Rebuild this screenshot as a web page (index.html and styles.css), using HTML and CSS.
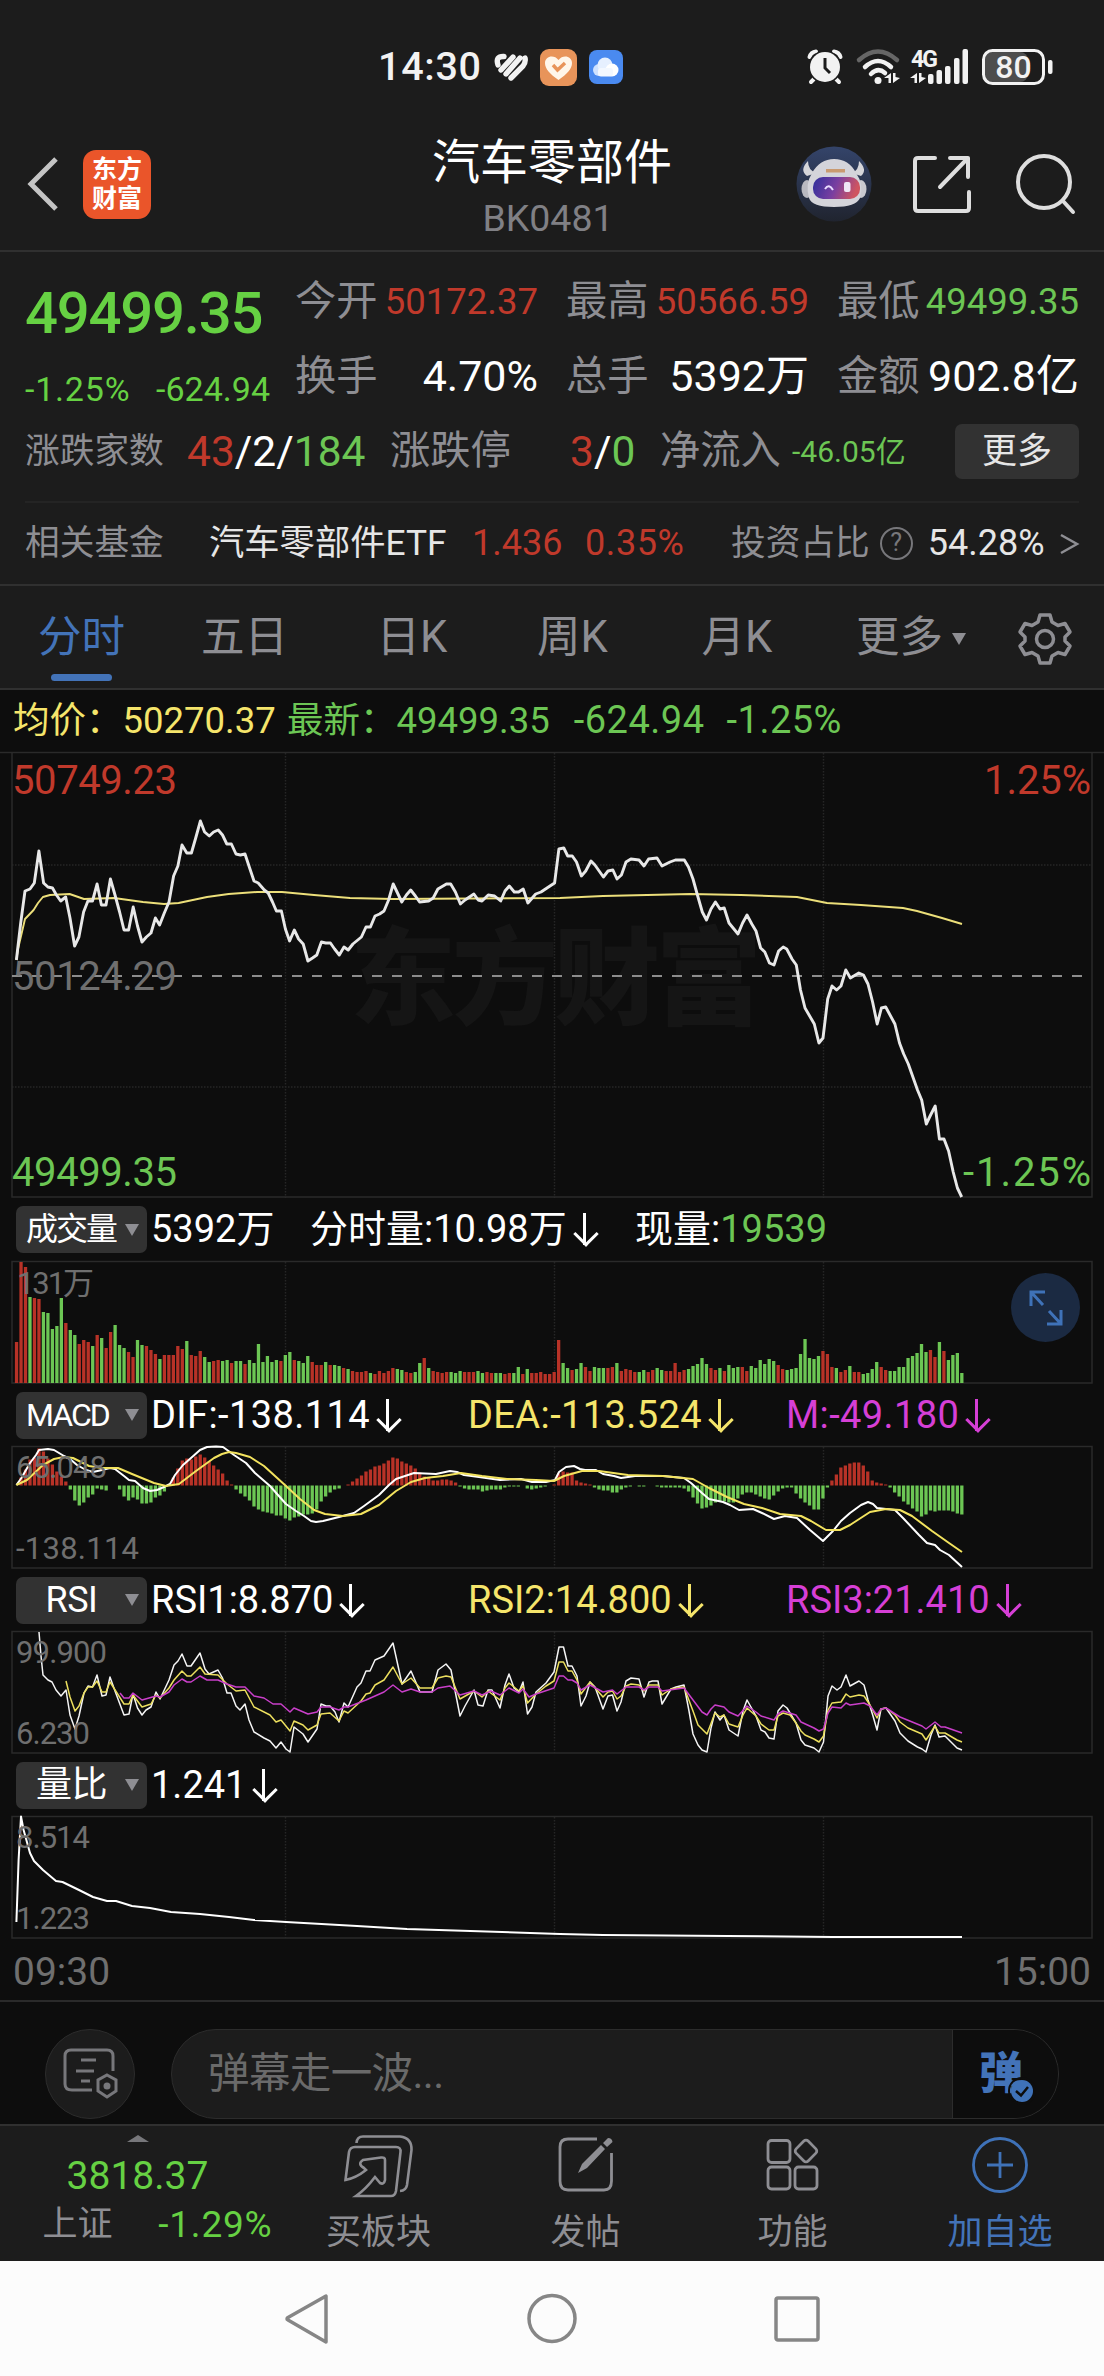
FILE: index.html
```html
<!DOCTYPE html>
<html lang="zh-CN">
<head>
    <meta charset="UTF-8">
    <meta name="viewport" content="width=device-width, initial-scale=1.0">
    <title>汽车零部件 BK0481</title>
    <link rel="stylesheet" href="styles.css">
</head>
<body>
    <!-- Status bar -->
    <div class="status-bar">
        <div class="status-left">
            <span class="clock">14:30</span>
            <svg class="ico-stripes" width="34" height="28" viewBox="0 0 34 28">
                <g stroke="#f2f2f2" stroke-width="5.4" stroke-linecap="round" fill="none">
                    <path d="M4 12 Q1 3 10 3.5 M7 17 L19 4 M12 21 L26 5 M17 25 L29 13 Q32 9 31 5"/>
                </g>
            </svg>
            <svg class="ico-heart" width="37" height="37" viewBox="0 0 37 37">
                <rect width="37" height="37" rx="9" fill="#e8945a"/>
                <path d="M18.5 31 C10 25 5 20 5 14 C5 7 14 5 18.5 11 C23 5 32 7 32 14 C32 20 27 25 18.5 31Z" fill="#fff6ea"/>
                <path d="M13 16 L17.5 21 L25 14" fill="none" stroke="#e8945a" stroke-width="3.4"/>
            </svg>
            <svg class="ico-cloud" width="34" height="34" viewBox="0 0 34 34">
                <rect width="34" height="34" rx="8" fill="#4a8af0"/>
                <circle cx="10" cy="20" r="6" fill="#cfe2ff"/>
                <circle cx="16" cy="15" r="7.5" fill="#e6f0ff"/>
                <circle cx="23" cy="20" r="6.5" fill="#fff"/>
                <rect x="9" y="18" width="15" height="8.5" rx="3" fill="#f3f8ff"/>
            </svg>
        </div>
        <div class="status-right">
            <svg width="36" height="36" viewBox="0 0 36 36">
                <g stroke="#f2f2f2" stroke-width="4" stroke-linecap="round">
                    <path d="M7 30 L4 33 M29 30 L32 33"/>
                    <path d="M2.5 8 Q4 3 9 2.5 M33.5 8 Q32 3 27 2.5" fill="none"/>
                </g>
                <circle cx="18" cy="18" r="16.5" fill="#1c1c1c"/>
                <circle cx="18" cy="18" r="15" fill="#f2f2f2"/>
                <path d="M18 9 V19 L23 24" fill="none" stroke="#1c1c1c" stroke-width="3"/>
            </svg>
            <svg class="ico-wifi" width="45" height="36" viewBox="0 0 45 36">
                <path d="M3 11 Q22 -6 41 11" fill="none" stroke="#666" stroke-width="4.5" stroke-linecap="round"/>
                <path d="M9 18 Q22 6 35 18 M15 25 Q22 18 29 24" fill="none" stroke="#f2f2f2" stroke-width="4.5" stroke-linecap="round"/>
                <circle cx="22" cy="31.5" r="3.5" fill="#f2f2f2"/>
                <path d="M28 29 L35 24 V34 H32.5 V29Z M37 24 H39.5 V28 L44 29 L37 34Z" fill="#f2f2f2"/>
            </svg>
            <svg class="ico-signal" width="59" height="36" viewBox="0 0 59 36">
                <text x="1" y="18" class="net-type">4G</text>
                <path d="M0 29 L7 24 V34 H4.5 V29Z M9 24 H11.5 V28 L16 29 L9 34Z" fill="#f2f2f2"/>
                <g fill="#f2f2f2">
                    <rect x="18" y="25" width="5.5" height="10" rx="2"/>
                    <rect x="26.5" y="21" width="5.5" height="14" rx="2"/>
                    <rect x="35" y="17" width="5.5" height="18" rx="2"/>
                    <rect x="44" y="9" width="5.5" height="26" rx="2"/>
                    <rect x="52.5" y="0" width="5.5" height="35" rx="2"/>
                </g>
            </svg>
            <svg class="ico-battery" width="71" height="36" viewBox="0 0 71 36">
                <rect x="2" y="3" width="44" height="30" rx="8" fill="#4d4d4d"/>
                <rect x="1.5" y="1.5" width="60" height="33" rx="9" fill="none" stroke="#f2f2f2" stroke-width="3"/>
                <rect x="66" y="11" width="4.5" height="14" rx="2" fill="#f2f2f2"/>
                <text x="31.5" y="29" text-anchor="middle" class="battery-text">80</text>
            </svg>
        </div>
    </div>

    <!-- Title bar -->
    <header class="title-bar">
        <div class="title-left">
            <svg width="34" height="58" viewBox="0 0 34 58">
                <path d="M31 4 L6 29 L31 54" fill="none" stroke="#c4c4c4" stroke-width="5"/>
            </svg>
            <div class="app-logo"><span>东方</span><span>财富</span></div>
        </div>
        <div class="title-center">
            <h1>汽车零部件</h1>
            <p>BK0481</p>
        </div>
        <div class="title-right">
            <svg width="76" height="76" viewBox="0 0 76 76">
                <defs>
                    <linearGradient id="visor" x1="0" y1="0" x2="1" y2="0.2">
                        <stop offset="0" stop-color="#2f2f9c"/>
                        <stop offset="0.55" stop-color="#7a3fa0"/>
                        <stop offset="1" stop-color="#cf5560"/>
                    </linearGradient>
                    <linearGradient id="sky" x1="0" y1="0" x2="0" y2="1">
                        <stop offset="0" stop-color="#34446a"/>
                        <stop offset="1" stop-color="#20242f"/>
                    </linearGradient>
                </defs>
                <circle cx="38" cy="38" r="37.5" fill="url(#sky)"/>
                <path d="M12 15 Q3 24 11 30 L20 27 Q12 24 12 15Z M63 15 Q72 24 65 30 L56 27 Q63 24 63 15Z" fill="#d5d5d9"/>
                <ellipse cx="11" cy="43" rx="5.5" ry="9" fill="#b9b9c0"/>
                <ellipse cx="65" cy="43" rx="5.5" ry="9" fill="#c9c9cf"/>
                <path d="M16 27 Q24 13 38 13 Q53 13 60 27 Q68 38 64 52 Q60 61 38 61 Q16 61 13 52 Q9 38 16 27Z" fill="#d4d4da"/>
                <rect x="17" y="31" width="47" height="22" rx="10" fill="url(#visor)"/>
                <path d="M29 43 Q33 37 37 44" fill="none" stroke="#e9dcff" stroke-width="2"/>
                <rect x="48" y="36" width="6.5" height="10" rx="2" fill="#efe6f5"/>
                <rect x="30" y="23" width="19" height="3.5" fill="#c99a70"/>
            </svg>
            <svg width="60" height="60" viewBox="0 0 60 60">
                <g fill="none" stroke="#dedede" stroke-width="4" stroke-linecap="round" stroke-linejoin="round">
                    <path d="M23 4 H6 Q3 4 3 7 V54 Q3 57 6 57 H54 Q57 57 57 54 V38"/>
                    <path d="M38 4 H56 V23 M56 4 L28 33"/>
                </g>
            </svg>
            <svg width="62" height="62" viewBox="0 0 62 62">
                <g fill="none" stroke="#dedede" stroke-width="4" stroke-linecap="round">
                    <circle cx="29" cy="29" r="26"/>
                    <path d="M48 48 L58 59"/>
                </g>
            </svg>
        </div>
    </header>

    <!-- Quote -->
    <section class="quote">
        <div class="quote-main">
            <div class="quote-price">
                <div class="price">49499.35</div>
                <div class="change"><span>-1.25%</span><span>-624.94</span></div>
            </div>
            <div class="stats">
                <div class="stat"><label>今开</label><b class="up sm">50172.37</b></div>
                <div class="stat"><label>最高</label><b class="up sm">50566.59</b></div>
                <div class="stat"><label>最低</label><b class="down sm">49499.35</b></div>
                <div class="stat"><label>换手</label><b>4.70%</b></div>
                <div class="stat"><label>总手</label><b>5392万</b></div>
                <div class="stat"><label>金额</label><b>902.8亿</b></div>
            </div>
        </div>
        <div class="breadth">
            <label class="lb-count">涨跌家数</label>
            <span class="count"><i class="up">43</i>/2/<i class="down">184</i></span>
            <label class="lb-limit">涨跌停</label>
            <span class="limit"><i class="up">3</i>/<i class="down">0</i></span>
            <label class="lb-flow">净流入</label>
            <span class="flow down">-46.05亿</span>
            <button class="more-btn">更多</button>
        </div>
        <div class="fund">
            <label>相关基金</label>
            <span class="fund-name">汽车零部件ETF</span>
            <span class="up fund-price">1.436</span>
            <span class="up fund-pct">0.35%</span>
            <label class="lb-ratio">投资占比</label>
            <span class="help">?</span>
            <span class="ratio">54.28%</span>
            <svg width="18" height="24" viewBox="0 0 18 24"><path d="M1 3 L17 12 L1 21" fill="none" stroke="#8e8e93" stroke-width="2.5"/></svg>
        </div>
    </section>

    <!-- Period tabs -->
    <nav class="tabs">
        <a class="active">分时</a>
        <a>五日</a>
        <a>日K</a>
        <a>周K</a>
        <a>月K</a>
        <a class="tab-more">更多<i class="caret"></i></a>
        <a class="tab-set">
            <svg width="54" height="54" viewBox="0 0 54 54">
                <g fill="none" stroke="#8e8e93" stroke-width="3.5" stroke-linejoin="round">
                    <path d="M22 3 H32 L34 10 L40 13.5 L47 11.5 L52 20 L47 25 V29 L52 34 L47 42.5 L40 40.5 L34 44 L32 51 H22 L20 44 L14 40.5 L7 42.5 L2 34 L7 29 V25 L2 20 L7 11.5 L14 13.5 L20 10Z"/>
                    <circle cx="27" cy="27" r="8.5"/>
                </g>
            </svg>
        </a>
    </nav>

    <!-- Charts -->
    <main class="charts">
        <div class="info-row">
            <span class="avg">均价：50270.37</span>
            <span class="last">最新：49499.35</span>
            <span class="last delta">-624.94</span>
            <span class="last delta">-1.25%</span>
        </div>

        <svg class="panel" width="1104" height="446" viewBox="0 0 1104 446">
            <g class="watermark"><text x="350" y="264" textLength="412">东方财富</text></g>
            <path class="grid" d="M12 113 H1092 M12 335 H1092 M285.5 1 V446 M554.5 1 V446 M823.5 1 V446"/>
            <path class="frame" d="M0 0.5 H1104 M12 0 V445 H1092 V0"/>
            <path d="M12 224 H1085" stroke="#8c8c8c" stroke-width="2" stroke-dasharray="10 10"/>
            <polyline class="line-avg" points="16.4,208 18,197 25,167 33.6,158 38,151 42.9,145 50,143 69.6,142 84,147 114,146 143,150 164,152 178.6,151 207,145 228.6,142 257,140 282,140 314,143 350,146 393,147 560,146 603,144 691,142 741,143 797,145 827,151 861,153 903,156 917,159 942,166 962,172"/>
            <polyline class="line-price" points="16.4,208 20.7,171 25,139 30,137 34.3,131 38.9,99 43.6,131 47.9,135 52.5,136 56.4,143 60.7,149 65.7,145 70,166 74.6,194 78.9,185 83.6,160 87.9,149 92.5,149 97.1,132 101.4,153 106,153 110.4,127 115,143 119.6,160 124,178 128.6,178 133.2,155 137.5,174 142,190 146.4,185 151,181 155.4,166 159.6,173 164.3,161 169,150 173.6,124 177.9,114 182,93 186.8,101 191.4,101 195.7,86 200.4,69 204.6,80 209.3,84 213.6,80 218.2,78 222.5,83 226.8,92 231.4,92 236,102 240.4,103 245,102 249.3,115 254,129 258.2,131 264.3,138 268.2,141 272.5,150 276.4,159 281.4,159 285.4,177 289.6,189 294.3,178 298.6,187 303.2,192 307.9,209 312.5,206 316.8,203 321.4,190 325.7,191 330.4,191 334.6,197 339.3,203 344,195 348.2,198 352.9,192 361.4,185 366,175 370.4,175 375,164 379.6,162 384,159 388.6,148 393.2,132 397.5,141 401.8,150 406.4,143 410.7,138 415.4,144 419.6,150 428.6,149 433.2,146 437.9,137 446.4,132 450.7,132 455.4,140 460.4,152 465,148 473.9,142 478.2,148 482,149 488.2,143 494.6,144 500.7,149 505,139 509.3,134 514.3,140 518.6,140 523.2,137 527.9,151 535.7,142 541,140 550,134 554.6,131 558.9,97 563.8,96 567.7,104 572.3,104 576.5,110 581.4,124 585.7,119 591,109 594.9,113 603.4,125 608,119 612.9,118 617,127 621.4,123 626,110 630.9,107 639,108 644,114 648.6,107 657,106 662,114 670,110 675.4,108 684.3,108 688.5,115 693,127 697.7,144 702.3,160 706.5,168 711,157 715.4,150 720,157 724.2,156 729,171 738,182 742.6,171 747,163 751.8,172 756,179 760.6,196 764.8,200 769.4,211 774,213 778.6,199 783.2,195 786.7,197 792,207 796.3,213 800.5,238 805,256 814.3,272 818.9,291 823,286 827.7,247 832,234 836.6,238 841,234 845.8,218 850.4,226 858.8,221 863.4,223 868,232 872.6,250 877.2,272 881.4,256 885.7,255 894.9,272 899.5,291 903.7,302 908.3,312 917.5,338 921.7,348 926.3,372 930.6,363 935.2,354 939.4,387 944,387 948.6,399 953.2,420 957.4,436 961.7,445"/>
            <g class="axis-lg">
                <text x="12" y="42" fill="#c0392b" textLength="165">50749.23</text>
                <text x="12" y="238" fill="#6f6f6f" textLength="165">50124.29</text>
                <text x="12" y="434" fill="#6cc654" textLength="165">49499.35</text>
                <text x="1091" y="42" fill="#c0392b" text-anchor="end" textLength="107">1.25%</text>
                <text x="1091" y="434" fill="#6cc654" text-anchor="end" textLength="128">-1.25%</text>
            </g>
        </svg>

        <div class="ind-row volume">
            <span class="ind-btn">成交量<i class="caret"></i></span>
            <span>5392万</span>
            <span>分时量:10.98万<i class="arrow"></i></span>
            <span>现量:<em class="down">19539</em></span>
        </div>
        <div class="panel-wrap">
            <svg class="panel" width="1104" height="123" viewBox="0 0 1104 123">
                <path class="grid" d="M285.5 1 V122 M554.5 1 V122 M823.5 1 V122"/>
                <rect class="frame" x="12" y="0.5" width="1080" height="121.5"/>
                <g id="volume-bars"></g>
                <text class="axis-sm" x="17" y="33" textLength="77">131万</text>
            </svg>
            <div class="expand">
                <svg width="34" height="36" viewBox="0 0 34 36">
                    <path d="M2 16 V2 H16 M2 2 L14 15 M32 20 V34 H18 M32 34 L20 21" fill="none" stroke="#3f72b8" stroke-width="3"/>
                </svg>
            </div>
        </div>

        <div class="ind-row macd">
            <span class="ind-btn">MACD<i class="caret"></i></span>
            <span class="c1">DIF:-138.114<i class="arrow"></i></span>
            <span class="c2">DEA:-113.524<i class="arrow"></i></span>
            <span class="c3">M:-49.180<i class="arrow"></i></span>
        </div>
        <svg class="panel" width="1104" height="123" viewBox="0 0 1104 123">
            <path class="grid" d="M285.5 1 V122 M554.5 1 V122 M823.5 1 V122"/>
            <rect class="frame" x="12" y="0.5" width="1080" height="121.5"/>
            <g id="macd-bars"></g>
            <polyline class="line-white" points="16.4,39 21.4,32 30,17 36,9 39,4 48,3 54,4 64,10 70,13 77,19 86,24 93,26 102,24 110,22 115,23 124,30 129,34 135,35 143,42 150,45 157,44 164,41 170,38 175,29 183,19 191,12 200,4 207,1 216,0.5 223,1 234,9 246,17 255,27 270,40 286,58 296,65 304,70 311,75 316,76 323,75 339,71 354,67 364,60 379,49 389,39 396,33 405,30 414,27 436,28 450,25 457,26 464,29 479,31 500,34 521,33 532,36 546,36 555,34 559,26 566,21 574,20 580,23 585,24 596,24 603,28 614,30 621,32 635,30 663,30 684,32 691,37 702,47 709,53 723,56 730,59 739,64 753,63 762,67 774,73 785,70 797,72 810,84 823,95 833,85 841,75 850,67 861,59 868,56 873,58 877,62 895,64 903,72 919,89 927,97 935,99 940,104 949,109 962,121"/>
            <polyline class="line-yellow" points="16.4,39 27,34 43,19 54,13 64,11 73,12 89,20 102,22 118,22 132,28 154,37 166,40 179,38 196,25 214,12 222,8 229,6 236,7 250,11 264,20 286,40 300,53 314,64 325,68 343,70 361,68 379,59 396,45 411,36 425,32 443,30 461,27 482,30 507,33 536,34 554,35 564,30 582,25 599,25 628,29 663,30 693,33 709,42 727,51 744,58 762,62 780,68 801,70 811,75 826,84 840,84 850,79 870,66 886,63 900,64 912,70 932,85 949,97 962,106"/>
            <text class="axis-sm" x="16" y="32" textLength="91">65.048</text>
            <text class="axis-sm" x="16" y="113" textLength="123">-138.114</text>
        </svg>

        <div class="ind-row">
            <span class="ind-btn"><em>RSI</em><i class="caret"></i></span>
            <span class="c1">RSI1:8.870<i class="arrow"></i></span>
            <span class="c2">RSI2:14.800<i class="arrow"></i></span>
            <span class="c3">RSI3:21.410<i class="arrow"></i></span>
        </div>
        <svg class="panel" width="1104" height="123" viewBox="0 0 1104 123">
            <path class="grid" d="M285.5 1 V122 M554.5 1 V122 M823.5 1 V122"/>
            <rect class="frame" x="12" y="0.5" width="1080" height="121.5"/>
            <polyline class="line-thin" stroke="#f5f5f5" points="39,1 41,25 43,44 48,49 52,51 56,59 61,65 66,59 70,84 75,98 79,85 84,62 88,55 92.5,56 97,44 102,65 106,64 110,46 115,60 124,84 129,83 133,63 137.5,77 142,84 146,79 151,76 156,61 160,68 169,49 174,34 178,30 182,23 187,35 191,35 200,22 205,38 209,43 218,39 222.5,47 227,62 231,62 236,75 240,79 245,73 249,89 254,101 264,107 270,110 276,117 281,111 286,118 290,121 294,96 303,103 308,111 317,98 321,73 326,75 330,75 335,81 339,91 344,72 348,76 357,56 361,52 366,40 370,40 375,29 384,25 393,12 402,53 411,40 420,61 432,61 438,39 446,33 451,39 460,85 465,75 474,59 478,74 483,75 488,59 492,59 500,77 505,54 509,43 514,57 519,61 523,51 527.5,83 532,76 536,61 546,52 554,41 559,16 563.5,16 568,35 572,35 577,45 581,75 586,65 590,51 595,56 603,78 608,65 612.5,64 617,80 621,71 626,50 631,47 639,48 644,66 649,51 652.5,50 658,50 662,73 671,58 676,56 684,54 689,80 693,103 698,114 702,119 707,121 711,97 715,81 720,89 724,84 729,99 738,105 743,80 747,69 756,85 761,99 765,101 769,107 774,108 778,80 783,74 787,77 796,92 801,109 805,114 814,117 819,121 823.5,111 828,65 832,55 837,59 841,56 846,44 850,55 859,50 864,54 868,69 873,85 877,99 881,78 886,77 895,90 900,102 908,110 917.5,116 922,118 926,121 931,104 935,94 939,106 945,105 953,113 957,117 962,119"/>
            <polyline class="line-thin" stroke="#ecdf5e" points="66,50 70,66 75,80 79,75 84,62 88,56 92.5,56 97,50 102,61 106,61 110,51 124,73 129,73 133,64 142,76 151,73 156,64 160,67 169,57 174,49 182,40 187,45 191,45 200,36 205,43 218,44 227,53 236,60 245,59 254,76 270,84 276,91 281,89 290,100 294,90 303,94 308,99 317,94 321,83 330,82 339,90 344,80 348,82 361,70 366,63 370,62 375,54 384,49 393,36 402,53 411,47 420,57 432,57 438,47 446,45 451,46 460,68 474,60 482,66 488,60 500,69 505,57 509,52 519,60 523,55 527.5,72 536,63 546,55 554,50 559,31 563.5,31 568,40 572,40 577,49 581,63 590,51 603,66 608,61 612.5,60 617,68 621,65 626,55 631,53 639,54 644,60 649,54 658,54 662,64 671,58 684,56 693,80 698,94 707,103 715,82 720,86 724,84 729,93 738,96 743,84 747,77 756,85 761,93 769,99 774,99 778,85 783,82 790,84 796,92 801,100 805,104 814,108 819,111 823.5,105 828,79 832,72 841,71 846,63 850,66 859,64 864,65 870,74 877,87 881,78 886,77 895,84 900,91 908,97 922,103 926,109 935,95 939,102 945,102 957,109 962,111"/>
            <polyline class="line-thin" stroke="#c93fc9" points="120,62 124,67 129,67 133,62 142,69 156,65 160,66 169,61 174,54 182,48 187,51 191,51 200,45 207,49 218,49 227,53 236,56 245,56 254,65 264,67 273,73 281,73 290,81 294,77 308,83 317,81 321,76 330,76 339,79 344,76 348,76 366,69 375,65 384,61 393,54 402,61 411,58 420,61 432,61 438,57 450,55 460,64 474,60 482,64 491,60 500,64 509,57 519,62 523,58 529,66 536,63 554,57 559,45 563.5,45 568,49 572,49 577,52 581,59 590,54 603,61 612.5,59 617,63 626,56 639,56 644,59 649,56 658,56 662,60 684,57 693,69 702,81 707,84 711,78 715,74 724,76 729,81 738,85 747,75 756,81 761,85 774,89 778,83 783,80 796,84 801,91 814,97 819,100 823.5,98 828,82 832,76 841,77 846,72 850,74 864,72 870,75 877,84 881,78 886,77 900,86 922,95 926,98 935,91 941,96 945,96 962,102"/>
            <text class="axis-sm" x="16" y="32" textLength="91">99.900</text>
            <text class="axis-sm" x="16" y="113" textLength="74">6.230</text>
        </svg>

        <div class="ind-row">
            <span class="ind-btn"><em>量比</em><i class="caret"></i></span>
            <span class="c1">1.241<i class="arrow"></i></span>
        </div>
        <svg class="panel" width="1104" height="123" viewBox="0 0 1104 123">
            <path class="grid" d="M285.5 1 V122 M554.5 1 V122 M823.5 1 V122"/>
            <rect class="frame" x="12" y="0.5" width="1080" height="121.5"/>
            <polyline class="line-white" points="16.4,106 18.6,44 21,0.5 23.6,14 30,37 34,45 43,54 56,65 62.5,66 79,74 93,81 107,85 116,85 132,90 150,92 171,96 200,98 229,101 254,104 286,106 357,110 407,113 560,118 603,119 727,120 833,121 962,121"/>
            <text class="axis-sm" x="16" y="32" textLength="74">8.514</text>
            <text class="axis-sm" x="16" y="113" textLength="74">1.223</text>
        </svg>
        <div class="time-row"><span>09:30</span><span>15:00</span></div>
    </main>

    <!-- Comment bar -->
    <div class="comment-bar">
        <div class="comment-set">
            <svg width="56" height="54" viewBox="0 0 56 54">
                <g fill="none" stroke="#77777b" stroke-width="3">
                    <path d="M30 43 H10 Q3 43 3 37 V9 Q3 3 9 3 H45 Q51 3 51 9 V24"/>
                    <path d="M19 13 H34 M14 24 H32 M19 34 H28"/>
                    <path d="M45 28 L54 33 V44 L45 50 L36 44 V33Z"/>
                </g>
                <circle cx="45" cy="39" r="3.5" fill="#77777b"/>
            </svg>
        </div>
        <div class="comment-input">
            <span>弹幕走一波...</span>
            <div class="danmu">弹
                <svg class="danmu-check" width="24" height="24" viewBox="0 0 24 24">
                    <circle cx="12" cy="12" r="11" fill="#3f72b8"/>
                    <path d="M6 12 L11 16.5 L18 8" fill="none" stroke="#0d0d0d" stroke-width="2.5"/>
                </svg>
            </div>
        </div>
    </div>

    <!-- Bottom toolbar -->
    <footer class="toolbar">
        <div class="index">
            <i class="caret-up"></i>
            <div class="index-value">3818.37</div>
            <div class="index-row"><label>上证</label><span>-1.29%</span></div>
        </div>
        <div class="tool">
            <svg width="70" height="64" viewBox="0 0 70 64">
                <g fill="none" stroke="#8e8e93" stroke-width="2.6">
                    <path d="M12.5 8 Q13 1.5 19 1.5 H56 Q68 3 67.5 15 L63 50 Q62 55.5 56 56"/>
                    <path d="M1.5 45 L5 17 Q6 12 11 12 H52 Q57 12 56.5 17 L52 56 Q51 61 47 61 H12 Q22 54 31 42 L36 48 Q40 50 41 45 V25 Q41 22 37 22.5 L19 25 Q13 29 20 33 L22 35 Q12 43 1.5 45Z"/>
                </g>
            </svg>
            <span>买板块</span>
        </div>
        <div class="tool">
            <svg width="56" height="64" viewBox="0 0 56 64">
                <path d="M39 4 H10 Q2 4 2 12 V46 Q2 55 10 55 H46 Q53.5 55 53.5 46 V18" fill="none" stroke="#8e8e93" stroke-width="2.8"/>
                <path d="M20 38 L24 29 L43 10 L47 14 L29 33Z M45 8 L50 3 Q54 3 54.5 7 L49 12Z" fill="#8e8e93"/>
            </svg>
            <span>发帖</span>
        </div>
        <div class="tool">
            <svg width="54" height="64" viewBox="0 0 54 64">
                <g fill="none" stroke="#8e8e93" stroke-width="2.8">
                    <rect x="2" y="5.5" width="22" height="22" rx="3.5"/>
                    <rect x="2" y="32" width="22" height="22" rx="3.5"/>
                    <rect x="29" y="32" width="22" height="22" rx="3.5"/>
                    <rect x="31.5" y="7.5" width="17" height="17" rx="3" transform="rotate(45 40 16)"/>
                </g>
            </svg>
            <span>功能</span>
        </div>
        <div class="tool tool-add">
            <svg width="58" height="64" viewBox="0 0 58 64">
                <g fill="none" stroke="#3f72b8" stroke-width="2.8">
                    <circle cx="29" cy="30" r="26.5"/>
                    <path d="M29 17 V43 M16 30 H42"/>
                </g>
            </svg>
            <span>加自选</span>
        </div>
    </footer>

    <!-- System navigation -->
    <div class="sys-nav">
        <svg width="46" height="52" viewBox="0 0 46 52"><path d="M42 3 V49 L4 27 Q2 26 4 24.5Z" fill="none" stroke="#868686" stroke-width="3.5" stroke-linejoin="round"/></svg>
        <svg width="52" height="52" viewBox="0 0 52 52"><circle cx="26" cy="25.5" r="23" fill="none" stroke="#868686" stroke-width="3.5"/></svg>
        <svg width="46" height="52" viewBox="0 0 46 52"><rect x="2" y="5" width="42" height="42" rx="2" fill="none" stroke="#868686" stroke-width="3.5"/></svg>
    </div>

    <script src="charts.js"></script>
</body>
</html>
```
FILE: styles.css
```css
:root {
    --bg: #0d0d0d;
    --bar-bg: #1c1c1c;
    --up: #c0392b;
    --down: #66d143;
    --down-soft: #6cc654;
    --gray: #8e8e93;
    --blue: #4373b8;
    --line: #303030;
}

* {
    box-sizing: border-box;
}

body {
    margin: 0;
    width: 1104px;
    background: var(--bg);
    color: #fff;
    font-family: Roboto, "Noto Sans CJK SC", sans-serif;
    line-height: 1.2;
    white-space: nowrap;
}

svg {
    display: block;
    flex: none;
    overflow: visible;
}

i, em {
    font-style: normal;
}

.up {
    color: var(--up);
}

.down {
    color: var(--down-soft);
}

/* status bar */
.status-bar {
    display: flex;
    justify-content: space-between;
    height: 110px;
    padding: 24px 51px 0 378px;
    background: var(--bar-bg);
}

.status-left, .status-right {
    display: flex;
    align-items: center;
    height: 86px;
}

.clock {
    font-size: 39.5px;
    font-weight: 500;
    letter-spacing: 0.7px;
    color: #f2f2f2;
}

.ico-stripes {
    margin-left: 12px;
}

.ico-heart, .ico-cloud {
    margin-left: 12px;
}

.ico-wifi {
    margin-left: 13px;
}

.ico-signal {
    margin-left: 9px;
}

.ico-battery {
    margin-left: 13px;
}

.net-type {
    font-size: 23px;
    font-weight: 700;
    fill: #f2f2f2;
    letter-spacing: -2px;
}

.battery-text {
    font-size: 32px;
    font-weight: 500;
    fill: #f2f2f2;
}

/* title bar */
.title-bar {
    display: grid;
    grid-template-columns: 300px 1fr 300px;
    height: 142px;
    background: var(--bar-bg);
    border-bottom: 2px solid var(--line);
}

.title-left {
    display: flex;
    align-items: center;
    gap: 24px;
    padding: 8px 0 0 25px;
}

.app-logo {
    display: flex;
    flex-direction: column;
    justify-content: center;
    align-items: center;
    width: 68px;
    height: 69px;
    border-radius: 13px;
    background: #ea552a;
    font-size: 25px;
    font-weight: 700;
    line-height: 29px;
}

.title-center {
    text-align: center;
}

.title-center h1 {
    margin: 25px 0 0;
    font-size: 48px;
    font-weight: 400;
    line-height: 56px;
}

.title-center p {
    margin: 4px 0 0 -8px;
    font-size: 37.5px;
    line-height: 46px;
    color: #808085;
}

.title-right {
    display: flex;
    align-items: center;
    justify-content: flex-end;
    gap: 43px;
    padding: 8px 27px 0 0;
}

.title-right svg:first-child {
    margin-right: -3px;
}

/* quote */
.quote {
    height: 334px;
    padding: 12px 25px 0;
    background: var(--bar-bg);
    border-bottom: 2px solid var(--line);
}

.quote label {
    color: var(--gray);
}

.quote-main {
    display: flex;
    height: 150px;
}

.quote-price {
    width: 270px;
    color: var(--down);
}

.price {
    margin-top: 15px;
    font-size: 58px;
    font-weight: 500;
    line-height: 68px;
    letter-spacing: -1.2px;
}

.change {
    display: flex;
    justify-content: space-between;
    width: 245px;
    margin-top: 21px;
    font-size: 34px;
    line-height: 42px;
}

.change span:first-child {
    letter-spacing: 0.8px;
}

.stats {
    display: grid;
    grid-template-columns: 243px 243px 242px;
    grid-template-rows: 75px 75px;
    column-gap: 28px;
}

.stat {
    display: flex;
    align-items: center;
    justify-content: space-between;
}

.stat label {
    font-size: 41.3px;
}

.stat b {
    font-size: 43px;
    font-weight: 400;
}

.stat b.sm {
    font-size: 36.5px;
}

.breadth, .fund {
    display: flex;
    align-items: center;
}

.breadth {
    height: 75px;
}

.lb-count {
    width: 162px;
    font-size: 34.7px;
}

.count {
    width: 203px;
    font-size: 42.5px;
}

.lb-limit {
    width: 180px;
    font-size: 40.3px;
}

.limit {
    width: 90px;
    font-size: 42.5px;
}

.lb-flow {
    width: 132px;
    font-size: 40.3px;
}

.flow {
    font-size: 30px;
}

.more-btn {
    width: 124px;
    height: 55px;
    margin-left: auto;
    border: 0;
    border-radius: 7px;
    background: #323232;
    color: #e6e6e6;
    font: 35px/50px Roboto, "Noto Sans CJK SC", sans-serif;
}

.fund {
    height: 83px;
    margin-top: 12px;
    border-top: 2px solid #242424;
    font-size: 36px;
}

.fund label {
    font-size: 34.7px;
}

.fund > label:first-child {
    width: 184px;
}

.fund-name {
    width: 263px;
    font-size: 35.3px;
    color: #e6e6e6;
}

.fund-price {
    width: 113px;
}

.fund-pct {
    width: 146px;
    letter-spacing: 0.6px;
}

.help {
    width: 33px;
    height: 33px;
    margin: 0 15px 0 10px;
    border: 2.5px solid #77777b;
    border-radius: 50%;
    color: #77777b;
    font-size: 25px;
    line-height: 28px;
    text-align: center;
}

.ratio {
    width: 132px;
    color: #e6e6e6;
}

/* tabs */
.tabs {
    display: grid;
    grid-template-columns: 163px 163px 172px 149px 180px 168px 109px;
    height: 104px;
    background: var(--bar-bg);
    border-bottom: 2px solid var(--line);
    color: var(--gray);
    font-size: 43.5px;
}

.tabs a {
    position: relative;
    display: flex;
    align-items: center;
    justify-content: center;
    padding-top: 3px;
}

.tabs .tab-set {
    padding-right: 9px;
}

.tabs .active {
    color: var(--blue);
}

.tabs .active::after {
    content: "";
    position: absolute;
    left: 51px;
    bottom: 7px;
    width: 61px;
    height: 7px;
    border-radius: 4px;
    background: var(--blue);
}

.caret {
    display: inline-block;
    border: 7px solid transparent;
    border-top: 12px solid var(--gray);
    border-bottom: 0;
}

.tab-more .caret {
    margin-left: 9px;
}

/* charts */
.charts {
    height: 1310px;
}

.info-row {
    display: flex;
    align-items: center;
    height: 62px;
    padding-left: 13px;
    font-size: 36.5px;
}

.info-row .avg {
    width: 274px;
    color: #f5e56b;
}

.last {
    margin-right: 24px;
    color: var(--down-soft);
}

.delta {
    margin-right: 22px;
    font-size: 38px;
    letter-spacing: 0.5px;
}

.grid {
    fill: none;
    stroke: #262626;
    stroke-width: 1.5;
    stroke-dasharray: 1.5 1.5;
}

.frame {
    fill: none;
    stroke: #2a2a2a;
    stroke-width: 1.5;
}

.watermark {
    font-size: 106px;
    font-weight: 900;
    fill: #151515;
}

.line-price, .line-avg, .line-white, .line-yellow, .line-thin {
    fill: none;
    stroke-linejoin: round;
}

.line-price {
    stroke: #e8e8e8;
    stroke-width: 2.9;
}

.line-avg {
    stroke: #ecdf7a;
    stroke-width: 1.9;
}

.line-white {
    stroke: #fff;
    stroke-width: 2;
}

.line-yellow {
    stroke: #f3e35e;
    stroke-width: 2;
}

.line-thin {
    stroke-width: 1.5;
}

.axis-lg {
    font-size: 40px;
}

.axis-sm {
    font-size: 31px;
    fill: #6f6f6f;
}

.panel-wrap {
    position: relative;
}

.expand {
    position: absolute;
    top: 12px;
    right: 24px;
    display: flex;
    align-items: center;
    justify-content: center;
    width: 69px;
    height: 69px;
    border-radius: 50%;
    background: #1b2a42;
}

.ind-row {
    display: grid;
    grid-template-columns: 131px 317px 318px 1fr;
    align-items: center;
    height: 62px;
    padding-left: 16px;
    font-size: 38px;
    line-height: 47px;
}

.ind-row.volume {
    grid-template-columns: 135px 159px 325px 1fr;
    height: 63px;
}

.ind-row.macd {
    letter-spacing: 0.4px;
}

.ind-btn {
    display: flex;
    align-items: center;
    justify-content: space-between;
    width: 131px;
    height: 47px;
    padding: 0 8px 0 10px;
    border-radius: 7px;
    background: #323232;
    font-size: 32px;
    letter-spacing: -2px;
}

.ind-btn em {
    flex: 1;
    padding-right: 8px;
    text-align: center;
    font-size: 36px;
    letter-spacing: -0.5px;
}

.c1, .c2, .c3 {
    padding-left: 4px;
}

.c2 {
    color: #f5e56b;
}

.c3 {
    color: #d63fd6;
}

.arrow {
    position: relative;
    display: inline-block;
    width: 19px;
    height: 33px;
    margin-left: 8px;
    vertical-align: -4px;
}

.arrow::before {
    content: "";
    position: absolute;
    left: 8px;
    top: 0;
    width: 3px;
    height: 32px;
    background: currentColor;
}

.arrow::after {
    content: "";
    position: absolute;
    left: 2px;
    bottom: 3px;
    width: 15px;
    height: 15px;
    border: solid currentColor;
    border-width: 0 3px 3px 0;
    transform: rotate(45deg);
}

.time-row {
    display: flex;
    justify-content: space-between;
    padding: 10px 13px 0;
    font-size: 39px;
    line-height: 46px;
    color: #6f6f6f;
}

/* comment bar */
.comment-bar {
    display: flex;
    gap: 36px;
    height: 126px;
    padding: 27px 45px 0;
    border-top: 2px solid #2a2a2a;
    border-bottom: 2px solid var(--line);
}

.comment-set {
    display: flex;
    align-items: center;
    justify-content: center;
    width: 90px;
    height: 90px;
    border: 1px solid #2c2c2c;
    border-radius: 50%;
    background: var(--bar-bg);
}

.comment-input {
    display: flex;
    align-items: center;
    justify-content: space-between;
    flex: 1;
    height: 90px;
    padding-left: 36px;
    border: 1px solid #2c2c2c;
    border-radius: 45px;
    background: var(--bar-bg);
    color: #6a6a6a;
    font-size: 41.5px;
    letter-spacing: -0.6px;
    overflow: hidden;
}

.danmu {
    position: relative;
    width: 106px;
    height: 88px;
    padding-left: 26px;
    border-left: 1px solid #2c2c2c;
    background: var(--bg);
    color: #4373b8;
    font-size: 44px;
    font-weight: 900;
    line-height: 88px;
}

.danmu-check {
    position: absolute;
    left: 57px;
    top: 49px;
    border-radius: 50%;
    box-shadow: 0 0 0 2px var(--bg);
}

/* toolbar */
.toolbar {
    display: grid;
    grid-template-columns: 275px 207px 207px 207px 208px;
    height: 135px;
    background: var(--bar-bg);
    color: var(--gray);
    font-size: 35px;
}

.index {
    display: flex;
    flex-direction: column;
    align-items: center;
    padding-top: 9px;
    color: var(--down);
}

.caret-up {
    border: 11px solid transparent;
    border-bottom: 7px solid #77777b;
    border-top: 0;
}

.index-value {
    margin-top: 10px;
    font-size: 39px;
    line-height: 48px;
}

.index-row {
    display: flex;
    justify-content: space-between;
    width: 230px;
    margin-left: 40px;
    line-height: 50px;
}

.index-row label {
    color: var(--gray);
}

.index-row span {
    font-size: 37px;
    letter-spacing: 0.8px;
}

.tool {
    display: flex;
    flex-direction: column;
    align-items: center;
    padding-top: 9px;
}

.tool span {
    margin-top: 9px;
    line-height: 50px;
}

.tool-add {
    color: var(--blue);
}

/* system navigation */
.sys-nav {
    display: flex;
    justify-content: center;
    gap: 196px;
    height: 115px;
    padding-top: 32px;
    background: #fcfcfc;
}
```
FILE: charts.js
```js
// one entry per minute, r = up, g = down, followed by the bar height
const volume = `r41 r121 r116 g86 r85 r84 g71 g70 g54 g57 g85 r60 g53 g48 r39 r43 r41 g37 r48 g45 r35 r51 g58 g38 g35 r31
r26 g43 g38 r37 r33 r29 g24 r28 r28 r28 r37 r34 g42 r28 r27 r32 g26 g21 r22 r23 g22 g23 r20 g22 g22 r19 g23 g20 g39 g21
g27 g21 g23 r22 g28 g31 r23 g22 g20 g27 r21 r18 r18 g21 r18 g18 g17 r15 g14 r12 r11 r11 r12 g10 r9 r12 r10 r12 r15 g14
g13 r11 r10 g11 g20 r25 g15 r12 r11 r10 r11 g11 g10 g12 r11 r11 r11 g12 g10 r11 r10 g10 g10 r9 r10 g10 g16 r9 g14 r10
r10 r11 r9 r9 r11 r43 g20 g15 r13 g14 g20 r16 r12 g16 g15 g15 r15 r16 g20 r12 r14 r13 r11 g11 g13 r11 r13 g15 g13 r12
r12 r20 r11 r13 g14 g17 g19 g25 g19 r15 r13 g15 r12 g18 g15 g16 r16 r12 g17 g15 g23 g19 g24 g22 r18 r14 g13 g14 g15 g29
g44 g25 g24 g27 r32 r29 r16 g15 r11 r13 g17 r11 r11 g9 g10 g14 g21 r16 r13 g12 g12 g16 g16 g25 g27 g30 g39 g31 r33 r26
g41 r32 g23 g28 g30 g10`.split(/\s+/);

const macd = [0, 8, 16, 26, 28, 37, 34, 27, 21, 14, 9, 4, -4, -15, -20, -17, -12, -9, -3, -4, -5, 0, 0, -4, -11, -15,
    -12, -14, -18, -18, -17, -12, -10, -6, 0, 8, 17, 25, 27, 26, 29, 31, 28, 24, 20, 16, 12, 5, 1, -4, -8, -11, -15,
    -21, -24, -26, -27, -28, -30, -30, -33, -35, -32, -31, -29, -29, -28, -24, -16, -11, -7, -4, -3, 0, 1, 4, 7, 10,
    14, 16, 19, 20, 22, 25, 28, 27, 24, 22, 20, 17, 13, 9, 8, 5, 5, 6, 6, 5, 3, -1, -3, -4, -4, -4, -6, -5, -4, -4,
    -4, -2, -1, -1, -1, 0, -3, -4, -3, -2, -1, 0, 1, 12, 14, 13, 13, 5, 3, 2, 1, -2, -4, -5, -5, -7, -7, -4, -2, -1,
    0, -1, -1, 0, 0, -1, -2, -2, -2, -2, -2, -3, -6, -12, -18, -23, -22, -20, -17, -16, -16, -17, -17, -13, -9, -7,
    -7, -9, -11, -13, -14, -10, -6, -3, -2, -2, -8, -13, -17, -20, -24, -24, -13, -2, 5, 11, 18, 20, 22, 23, 23, 20,
    14, 5, 3, 2, 1, -2, -7, -11, -16, -19, -23, -26, -31, -29, -25, -26, -25, -25, -25, -26, -28, -29];

const STEP = 4.48;
const START = 14.9;

function addBar(group, i, y, height, color) {
    const rect = document.createElementNS('http://www.w3.org/2000/svg', 'rect');
    rect.setAttribute('x', (START + i * STEP).toFixed(2));
    rect.setAttribute('y', y);
    rect.setAttribute('width', 3.3);
    rect.setAttribute('height', height);
    rect.setAttribute('fill', color);
    group.appendChild(rect);
}

const volumeGroup = document.getElementById('volume-bars');
volume.forEach((v, i) => {
    const h = Number(v.slice(1));
    addBar(volumeGroup, i, 122 - h, h, v[0] === 'r' ? '#b83227' : '#6cc654');
});

const macdGroup = document.getElementById('macd-bars');
macd.forEach((v, i) => {
    if (v > 0) addBar(macdGroup, i, 39.5 - v, v, '#b83227');
    if (v < 0) addBar(macdGroup, i, 39.5, -v, '#6cc654');
});
```
